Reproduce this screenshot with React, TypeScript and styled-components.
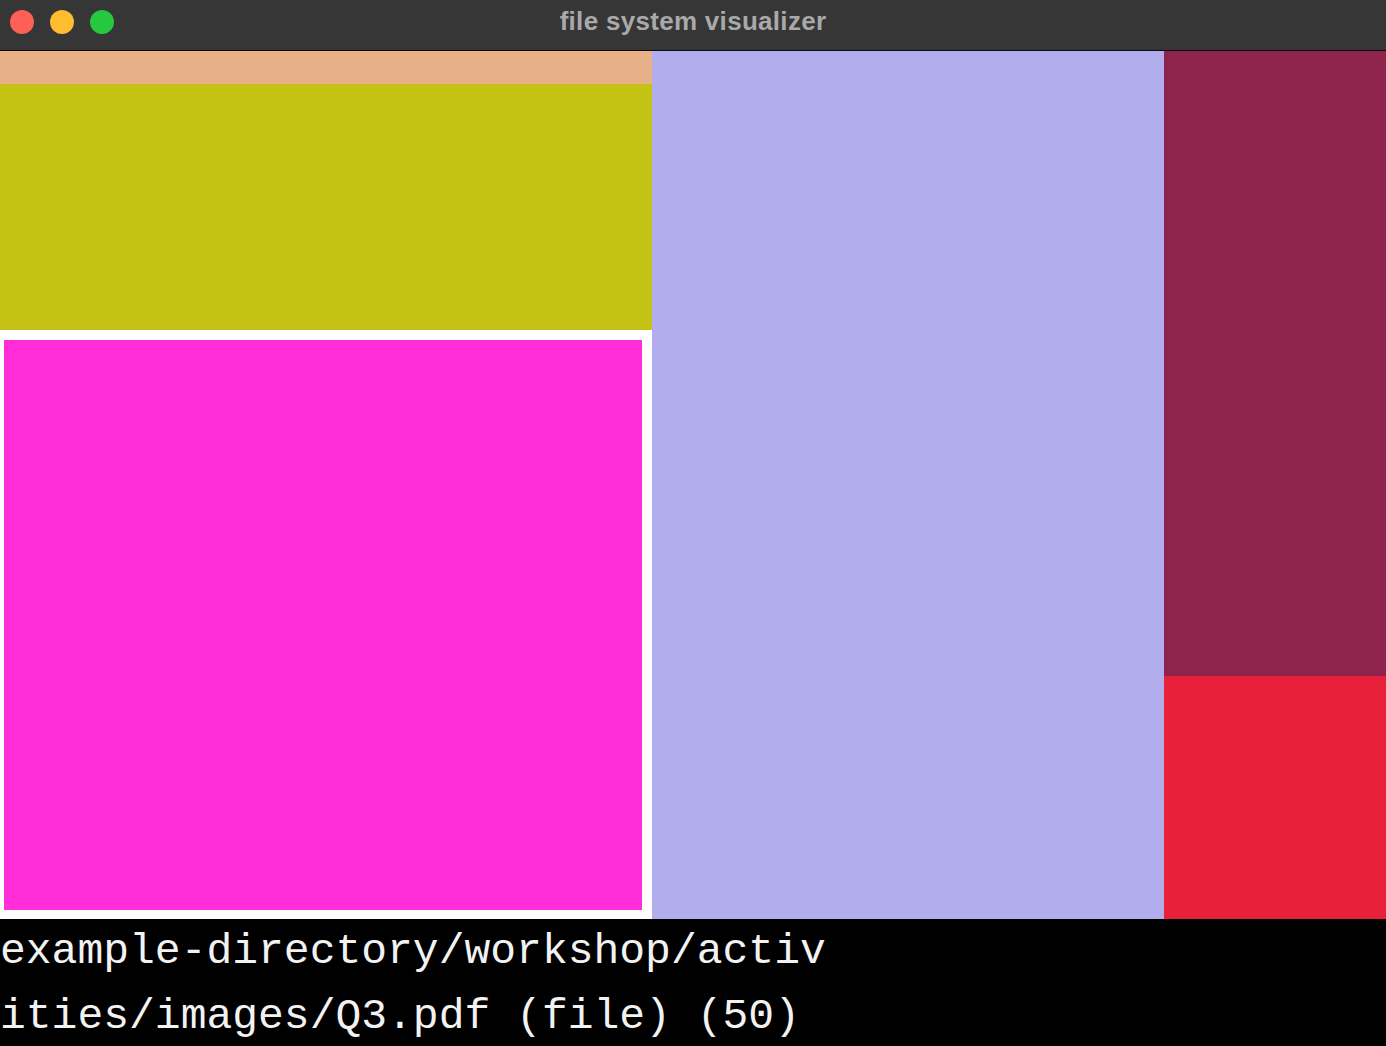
import React from "react";
import styled, { createGlobalStyle } from "styled-components";

const Global = createGlobalStyle`
  html, body { margin: 0; padding: 0; background: #000; overflow: hidden; }
  #root { width: 1386px; height: 1046px; }
`;

const Window = styled.div`
  width: 1386px;
  height: 1046px;
  display: flex;
  flex-direction: column;
  background: #000;
`;

const TitleBar = styled.div`
  position: relative;
  height: 50px;
  flex: none;
  background: #363636;
  border-bottom: 1px solid #0a0a0a;
  display: flex;
  align-items: center;
  justify-content: center;
`;

const Lights = styled.div`
  position: absolute;
  left: 10px;
  top: 10px;
  display: flex;
  gap: 16px;
`;

const Light = styled.span<{ $c: string }>`
  width: 24px;
  height: 24px;
  border-radius: 50%;
  background: ${(p) => p.$c};
`;

const Title = styled.div`
  font-family: "Liberation Sans", Arial, sans-serif;
  font-weight: bold;
  font-size: 26px;
  letter-spacing: 0.3px;
  color: #a9a9a9;
  margin-top: -8px;
`;

const Map = styled.div`
  height: 868px;
  flex: none;
  display: flex;
`;

const Column = styled.div<{ $w: number }>`
  width: ${(p) => p.$w}px;
  flex: none;
  display: flex;
  flex-direction: column;
`;

const Cell = styled.div<{ $c: string; $h?: number }>`
  background: ${(p) => p.$c};
  ${(p) => (p.$h !== undefined ? `height: ${p.$h}px; flex: none;` : "flex: 1;")}
`;

const Folder = styled.div`
  flex: 1;
  background: #fff;
  padding: 10px 10px 9px 4px;
  display: flex;
`;

const Status = styled.div`
  flex: 1;
  font-family: "Courier New", "Liberation Mono", monospace;
  font-size: 43px;
  line-height: 65px;
  color: #f2f2f2;
  width: 840px;
  word-break: break-all;
`;

export default function App() {
  return (
    <>
      <Global />
      <Window>
        <TitleBar>
          <Lights>
            <Light $c="#fe5f57" />
            <Light $c="#febc2e" />
            <Light $c="#27c840" />
          </Lights>
          <Title>file system visualizer</Title>
        </TitleBar>
        <Map>
          <Column $w={652}>
            <Cell $c="#e8b088" $h={33} />
            <Cell $c="#c4c214" $h={246} />
            <Folder>
              <Cell $c="#ff2ed8" />
            </Folder>
          </Column>
          <Column $w={512}>
            <Cell $c="#b2aeee" />
          </Column>
          <Column $w={222}>
            <Cell $c="#8e234c" $h={625} />
            <Cell $c="#e9203a" />
          </Column>
        </Map>
        <Status>example-directory/workshop/activities/images/Q3.pdf (file) (50)</Status>
      </Window>
    </>
  );
}
